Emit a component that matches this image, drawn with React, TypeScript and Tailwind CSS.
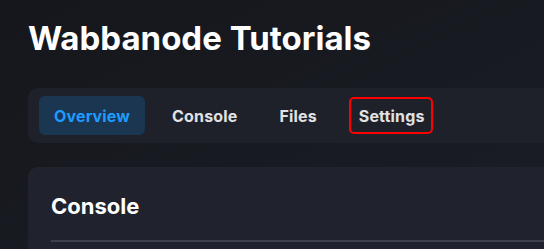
import React from 'react';

const tabs = ['Overview', 'Console', 'Files', 'Settings'];

export default function App() {
  const active = 'Overview';
  const highlighted = 'Settings';

  return (
    <div
      className="h-screen w-full overflow-hidden bg-gradient-to-br from-[#15171c] via-[#181a21] to-[#1b1d24] pl-[28px] pt-[22px] text-white"
      style={{ fontFamily: 'Inter, "Liberation Sans", sans-serif' }}
    >
      <h1 className="text-[33px] font-bold leading-[33px] text-white">Wabbanode Tutorials</h1>

      {/* tabs */}
      <nav className="-mr-6 mt-[33px] flex h-[55px] items-center gap-[12px] rounded-[10px] bg-[#1e212a] px-[11px]">
        {tabs.map((tab) => (
          <div
            key={tab}
            className={
              'relative flex h-[39px] items-center rounded-md px-[15px] text-[16px] font-bold tracking-[0.01em] ' +
              (tab === active ? 'bg-[#1b3650] text-[#1e9bff]' : 'text-[#e2e2e4]')
            }
          >
            {tab}
            {tab === highlighted && (
              <span className="pointer-events-none absolute inset-y-[1px] left-[5px] right-[7px] rounded-[5px] border-2 border-[#ff0000]" />
            )}
          </div>
        ))}
      </nav>

      {/* card */}
      <section className="-mr-6 mt-6 h-[120px] rounded-tl-[10px] rounded-tr-[10px] bg-[#20232d] px-[23px] pt-[28px]">
        <h2 className="text-[22px] font-bold leading-[23px] text-white">Console</h2>
        <div className="mt-[22px] h-[2px] bg-[#3d404d]" />
      </section>
    </div>
  );
}
